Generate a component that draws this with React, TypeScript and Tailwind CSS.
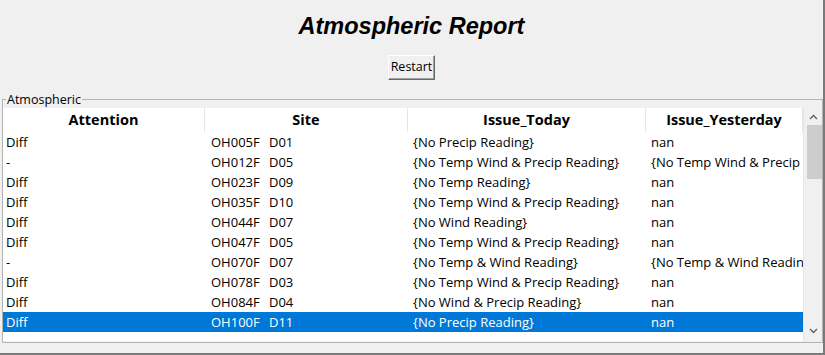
import React from 'react';

type Row = { attention: string; site: string; district: string; today: string; yesterday: string };

const rows: Row[] = [
  { attention: 'Diff', site: 'OH005F', district: 'D01', today: '{No Precip Reading}', yesterday: 'nan' },
  { attention: '-', site: 'OH012F', district: 'D05', today: '{No Temp Wind & Precip Reading}', yesterday: '{No Temp Wind & Precip Reading}' },
  { attention: 'Diff', site: 'OH023F', district: 'D09', today: '{No Temp Reading}', yesterday: 'nan' },
  { attention: 'Diff', site: 'OH035F', district: 'D10', today: '{No Temp Wind & Precip Reading}', yesterday: 'nan' },
  { attention: 'Diff', site: 'OH044F', district: 'D07', today: '{No Wind Reading}', yesterday: 'nan' },
  { attention: 'Diff', site: 'OH047F', district: 'D05', today: '{No Temp Wind & Precip Reading}', yesterday: 'nan' },
  { attention: '-', site: 'OH070F', district: 'D07', today: '{No Temp & Wind Reading}', yesterday: '{No Temp & Wind Reading}' },
  { attention: 'Diff', site: 'OH078F', district: 'D03', today: '{No Temp Wind & Precip Reading}', yesterday: 'nan' },
  { attention: 'Diff', site: 'OH084F', district: 'D04', today: '{No Wind & Precip Reading}', yesterday: 'nan' },
  { attention: 'Diff', site: 'OH100F', district: 'D11', today: '{No Precip Reading}', yesterday: 'nan' },
];

const selectedIndex = 9;

const uiFont = "font-['Open_Sans','Noto_Sans',sans-serif]";

const App: React.FC = () => {
  return (
    <div className={`w-[825px] h-[355px] bg-[#f0f0f0] border-r-2 border-b-2 border-[#7a7a7a] flex flex-col overflow-hidden text-black ${uiFont}`}>
      {/* Titulo */}
      <div className="pt-[13px] h-[39px] text-center font-['Liberation_Sans',Arial,sans-serif] font-bold italic text-[23.5px] leading-[26px]">
        Atmospheric Report
      </div>

      <div className="flex justify-center mt-[16px]">
        <button className="w-[47px] h-[25px] bg-[#f0f0f0] border border-t-white border-l-white border-r-[#696969] border-b-[#696969] shadow-[inset_-1px_-1px_0_#a0a0a0] text-[12.5px] leading-none">
          Restart
        </button>
      </div>

      {/* Labelframe */}
      <div className="relative mt-[19px] ml-[2px] w-[821px] h-[244px] border border-[#b4b4b4] pt-[8px]">
        <span className="absolute left-[3px] -top-[8px] bg-[#f0f0f0] px-[1px] text-[12.5px] leading-[15px]">Atmospheric</span>

        <div className="flex h-[233px] bg-white">
          <div className="w-[800px] flex flex-col">
            {/* Cabecalho */}
            <div className="flex h-[24px] text-[14.5px] font-bold leading-[24px]">
              <div className="w-[202px] text-center border-r border-[#e5e5e5]">Attention</div>
              <div className="w-[203px] text-center border-r border-[#e5e5e5]">Site</div>
              <div className="w-[238px] text-center border-r border-[#e5e5e5]">Issue_Today</div>
              <div className="w-[157px] text-center border-r border-[#e5e5e5]">Issue_Yesterday</div>
            </div>
            {rows.map((r, i) => (
              <div
                key={r.site}
                className={`flex h-[20px] text-[13px] leading-[20px] whitespace-nowrap ${i === selectedIndex ? 'bg-[#0078d7] text-white' : ''}`}
              >
                <div className="w-[202px] pl-[3px] overflow-hidden">{r.attention}</div>
                <div className="w-[203px] pl-[6px] overflow-hidden">
                  <span className="inline-block w-[58px]">{r.site}</span>
                  {r.district}
                </div>
                <div className="w-[238px] pl-[5px] overflow-hidden">{r.today}</div>
                <div className="w-[157px] pl-[5px] overflow-hidden">{r.yesterday}</div>
              </div>
            ))}
          </div>

          {/* Scrollbar */}
          <div className="w-[19px] bg-[#f0f0f0] border-l border-[#e6e6e6] flex flex-col items-center">
            <div className="h-[17px] w-full flex items-center justify-center">
              <svg width="9" height="6" viewBox="0 0 9 6">
                <path d="M1 5 L4.5 1.5 L8 5" fill="none" stroke="#606060" strokeWidth="1.3" />
              </svg>
            </div>
            <div className="w-[15px] h-[54px] bg-[#cdcdcd] ml-[2px]" />
            <div className="flex-1" />
            <div className="h-[17px] w-full flex items-center justify-center mb-[2px]">
              <svg width="9" height="6" viewBox="0 0 9 6">
                <path d="M1 1 L4.5 4.5 L8 1" fill="none" stroke="#606060" strokeWidth="1.3" />
              </svg>
            </div>
          </div>
        </div>
      </div>
    </div>
  );
};

export default App;
